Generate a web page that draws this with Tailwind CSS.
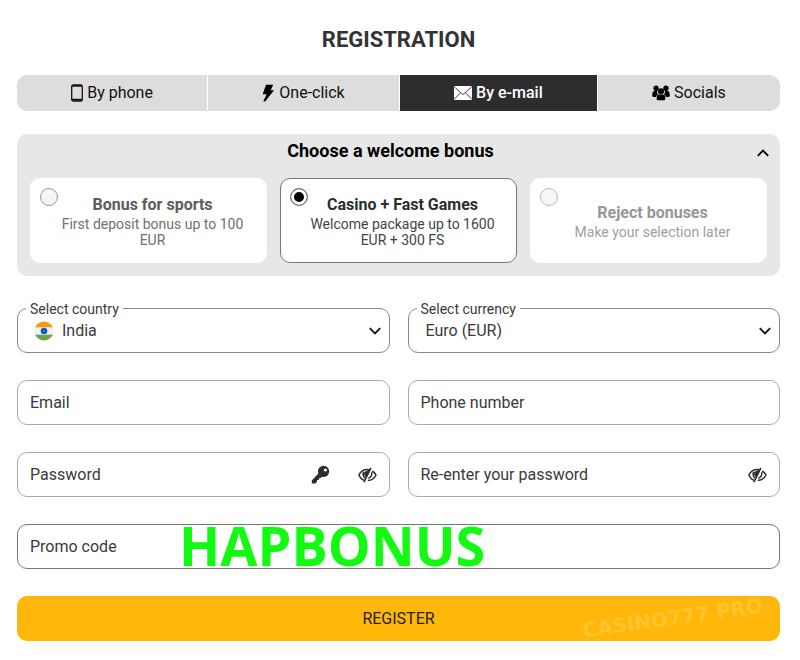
<!DOCTYPE html>
<html lang="en">
<head>
  <meta charset="UTF-8">
  <meta name="viewport" content="width=device-width, initial-scale=1.0">
  <title>Registration</title>
  <script src="https://cdn.jsdelivr.net/npm/@tailwindcss/browser@4"></script>
</head>
<body class="bg-white font-[Roboto,sans-serif] text-[#3a3a3a]">
  <main class="pt-[25px] pb-4 pl-[17px] pr-5">
    <h1 class="text-center text-[22px] leading-[30px] font-bold text-[#333]">REGISTRATION</h1>

    <!-- Registration methods -->
    <nav class="mt-5 flex h-9 gap-px overflow-hidden rounded-[10px] text-base text-[#111]">
      <button type="button" class="flex flex-auto items-center justify-center gap-1 bg-[#ddd]">
        <svg class="h-[18px] w-3" viewBox="0 0 12 18" fill="none" stroke="#111">
          <rect x="0.7" y="1" width="10.6" height="16" rx="1.6" stroke-width="1.3" />
          <path d="M1 2h10" stroke-width="1.4" />
          <path d="M1 15.6h10" stroke-width="1.8" />
        </svg>
        By phone
      </button>
      <button type="button" class="flex flex-auto items-center justify-center gap-1 bg-[#ddd]">
        <svg class="h-[18px] w-[13px]" viewBox="0 0 13 18" fill="#000">
          <path d="M4 .8h7.200L8.800 6.200H12L3.200 17.400 1.300 17.200 4.600 10.200H.7z" />
        </svg>
        One-click
      </button>
      <button type="button" class="flex flex-auto items-center justify-center gap-1 bg-[#2d2d2d] font-medium text-white">
        <svg class="h-[14px] w-[18px]" viewBox="0 0 18 14">
          <rect width="18" height="14" rx="1" fill="#fff" />
          <path d="M.5 1 9 8.600 17.500 1M.5 13 6.600 6.600M17.500 13 11.400 6.600" fill="none" stroke="#2d2d2d" stroke-width="0.900" />
        </svg>
        By e-mail
      </button>
      <button type="button" class="flex flex-auto items-center justify-center gap-1 bg-[#ddd]">
        <svg class="h-4 w-[18px]" viewBox="0 0 19 16" fill="#000">
          <circle cx="4.300" cy="3" r="2.800" />
          <circle cx="14.700" cy="3" r="2.800" />
          <path d="M.3 11V9C.3 7 1.600 5.600 3.200 5.600H5.400C5.200 8 5.600 9 6.600 9.800 5.300 10.200 4.500 11 4.200 12.200H1.500C.7 12.200.3 11.700.3 11zM18.700 11V9c0-2-1.300-3.400-2.900-3.400H13.600c.2 2.400-.2 3.400-1.200 4.200 1.300.4 2.100 1.200 2.400 2.400h2.700c.8 0 1.200-.5 1.200-1.200z" />
          <circle cx="9.500" cy="6.200" r="3.200" />
          <path d="M4.900 14v-1.200c0-1.700 1.100-3.200 2.700-3.200h3.800c1.600 0 2.700 1.500 2.700 3.200V14c0 .9-.7 1.700-1.500 1.700H6.400C5.600 15.700 4.900 14.900 4.900 14z" />
        </svg>
        Socials
      </button>
    </nav>

    <form>
      <!-- Welcome bonus -->
      <section class="mt-[23px] rounded-[10px] bg-[#e7e7e7] px-[13px] pb-[13px]">
        <div class="-mr-0.5 mb-[10px] flex h-[34px] items-center gap-1.5">
          <h2 class="flex-1 text-center text-lg font-bold text-black">Choose a welcome bonus</h2>
          <button type="button" aria-label="Collapse" class="pt-1">
            <svg class="h-2 w-3" viewBox="0 0 12 8" fill="none" stroke="#000" stroke-width="1.800">
              <path d="M.8 6.800 6 1.600l5.200 5.200" />
            </svg>
          </button>
        </div>
        <div class="grid grid-cols-3 gap-[13px] text-center">
          <label class="relative flex h-[85px] flex-col justify-center rounded-[10px] border border-white bg-white pr-4 pl-6">
            <input type="radio" name="bonus" class="absolute top-[9px] left-[9px] size-[18px] appearance-none rounded-full border border-[#999] bg-[#f5f5f5] checked:bg-black checked:shadow-[inset_0_0_0_3px_white]">
            <span class="text-base leading-[22px] font-bold text-[#5c5c5c]">Bonus for sports</span>
            <span class="text-sm leading-4 text-[#707070]">First deposit bonus up to 100 EUR</span>
          </label>
          <label class="relative flex h-[85px] flex-col justify-center rounded-[10px] border border-[#777] bg-white pr-4 pl-6">
            <input type="radio" name="bonus" checked class="absolute top-[9px] left-[9px] size-[18px] appearance-none rounded-full border border-[#777] bg-[#f5f5f5] checked:bg-black checked:shadow-[inset_0_0_0_3px_white]">
            <span class="text-base leading-[22px] font-bold text-[#2d2d2d]">Casino + Fast Games</span>
            <span class="text-sm leading-4 text-[#444]">Welcome package up to 1600 EUR + 300 FS</span>
          </label>
          <label class="relative flex h-[85px] flex-col justify-center rounded-[10px] border border-white bg-white pr-4 pl-6">
            <input type="radio" name="bonus" class="absolute top-[9px] left-[9px] size-[18px] appearance-none rounded-full border border-[#bbb] bg-[#f7f7f7] checked:bg-black checked:shadow-[inset_0_0_0_3px_white]">
            <span class="text-base leading-[22px] font-bold text-[#969696]">Reject bonuses</span>
            <span class="text-sm leading-4 text-[#a0a0a0]">Make your selection later</span>
          </label>
        </div>
      </section>

      <!-- Fields -->
      <div class="mt-8 grid grid-cols-2 gap-x-[18px] gap-y-[27px] text-base">
        <div class="relative flex h-[45px] items-center rounded-[10px] border border-[#888]">
          <label for="country" class="absolute -top-2 left-2 bg-white px-1 text-sm leading-4">Select country</label>
          <svg class="pointer-events-none absolute left-4 size-5" viewBox="0 0 20 20">
            <clipPath id="round"><circle cx="10" cy="10" r="9.600" /></clipPath>
            <g clip-path="url(#round)">
              <rect width="20" height="20" fill="#f1f1f1" />
              <rect width="20" height="6.300" fill="#ff9811" />
              <rect y="13.700" width="20" height="6.300" fill="#6da544" />
            </g>
            <circle cx="10" cy="10" r="3.300" fill="#1463c9" />
            <circle cx="10" cy="10" r="1.600" fill="#2a8af0" stroke="#0b3f94" stroke-width="0.800" />
          </svg>
          <select id="country" class="size-full appearance-none bg-transparent pl-11 outline-none">
            <option>India</option>
          </select>
          <svg class="pointer-events-none absolute right-2 h-2 w-3" viewBox="0 0 12 8" fill="none" stroke="#111" stroke-width="1.800">
            <path d="M.8 1.200 6 6.400l5.200-5.200" />
          </svg>
        </div>
        <div class="relative flex h-[45px] items-center rounded-[10px] border border-[#888]">
          <label for="currency" class="absolute -top-2 left-2 bg-white px-1 text-sm leading-4">Select currency</label>
          <select id="currency" class="size-full appearance-none bg-transparent pl-[17px] outline-none">
            <option>Euro (EUR)</option>
          </select>
          <svg class="pointer-events-none absolute right-2 h-2 w-3" viewBox="0 0 12 8" fill="none" stroke="#111" stroke-width="1.800">
            <path d="M.8 1.200 6 6.400l5.200-5.200" />
          </svg>
        </div>

        <input type="email" aria-label="Email" placeholder="Email" class="h-[45px] w-full rounded-[10px] border border-[#aaa] px-3 outline-none placeholder:text-[#3a3a3a]">
        <input type="tel" aria-label="Phone number" placeholder="Phone number" class="h-[45px] w-full rounded-[10px] border border-[#aaa] px-3 outline-none placeholder:text-[#3a3a3a]">

        <div class="flex h-[45px] items-center rounded-[10px] border border-[#aaa] px-3">
          <input type="password" aria-label="Password" placeholder="Password" class="min-w-0 flex-1 outline-none placeholder:text-[#3a3a3a]">
          <button type="button" aria-label="Generate password" class="mr-7">
            <svg class="size-[19px]" viewBox="0 0 19 19" fill="#2d2d2d">
              <path fill-rule="evenodd" d="M12.600.8a5.600 5.600 0 1 1-1.800 10.900L9.400 13.200H7.800v1.900H6v1.700l-1.600 1.600H.8V15.400L7.400 8.600A5.600 5.600 0 0 1 12.600.8zM14.400 3.400a1.600 1.600 0 1 0 0 3.200 1.600 1.600 0 0 0 0-3.200z" />
            </svg>
          </button>
          <button type="button" aria-label="Show password">
            <svg class="h-4 w-[19px]" viewBox="0 0 19 16" fill="none" stroke="#2d2d2d" stroke-width="1.500">
              <path d="M5.600 13.200C3.500 12.200 1.800 10.300.9 8 2.600 4.600 5.700 2.600 9.300 2.600c.9 0 1.800.1 2.600.4M14.300 4c1.600 1 2.900 2.300 3.700 4-1.500 3.200-4.500 5.300-8.200 5.500" />
              <path d="M5.600 4.800C4.800 7.200 5.200 9.400 6.800 11" />
              <path d="M6.700 5.200 10.700 3.400 8.200 9.400 6.800 8.400z" fill="#2d2d2d" stroke-width="1" />
              <path d="M12.900.9 5.900 15.200" stroke-width="1.600" />
              <path d="M13.700 5.200C14.200 8 12.700 10.400 10.400 11.300" />
            </svg>
          </button>
        </div>
        <div class="flex h-[45px] items-center rounded-[10px] border border-[#aaa] px-3">
          <input type="password" aria-label="Re-enter your password" placeholder="Re-enter your password" class="min-w-0 flex-1 outline-none placeholder:text-[#3a3a3a]">
          <button type="button" aria-label="Show password">
            <svg class="h-4 w-[19px]" viewBox="0 0 19 16" fill="none" stroke="#2d2d2d" stroke-width="1.500">
              <path d="M5.600 13.200C3.500 12.200 1.800 10.300.9 8 2.600 4.600 5.700 2.600 9.300 2.600c.9 0 1.800.1 2.600.4M14.300 4c1.600 1 2.900 2.300 3.700 4-1.500 3.200-4.500 5.300-8.200 5.500" />
              <path d="M5.600 4.800C4.800 7.200 5.200 9.400 6.800 11" />
              <path d="M6.700 5.200 10.700 3.400 8.200 9.400 6.800 8.400z" fill="#2d2d2d" stroke-width="1" />
              <path d="M12.900.9 5.900 15.200" stroke-width="1.600" />
              <path d="M13.700 5.200C14.200 8 12.700 10.400 10.400 11.300" />
            </svg>
          </button>
        </div>

        <div class="relative col-span-2">
          <input type="text" aria-label="Promo code" placeholder="Promo code" class="h-[45px] w-full rounded-[10px] border border-[#777] px-3 outline-none placeholder:text-[#3a3a3a]">
          <span class="pointer-events-none absolute top-0 left-[162px] font-['Open_Sans',sans-serif] text-[54px] leading-[42px] font-bold text-[#12f912]">HAPBONUS</span>
        </div>

        <div class="relative col-span-2">
          <button type="submit" class="h-[45px] w-full rounded-[10px] bg-[#ffb80a] text-[#222]">REGISTER</button>
          <span class="pointer-events-none absolute top-3 right-4 -rotate-8 font-['DejaVu_Sans',sans-serif] text-xl leading-5 font-bold whitespace-nowrap text-[#ffc52e]">CASINO777 PRO</span>
        </div>
      </div>
    </form>
  </main>
</body>
</html>
